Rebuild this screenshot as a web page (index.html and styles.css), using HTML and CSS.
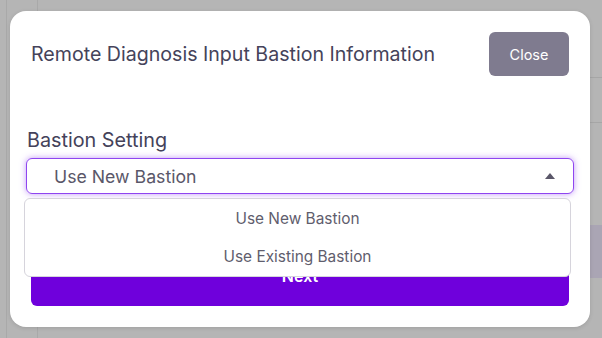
FILE: index.html
```html
<!DOCTYPE html>
<html lang="en">
<head>
    <meta charset="UTF-8">
    <meta name="viewport" content="width=device-width, initial-scale=1.0">
    <title>Remote Diagnosis</title>
    <link rel="stylesheet" href="styles.css">
</head>
<body>
    <div class="page">
        <div class="page-side"></div>
        <div class="page-main">
            <div class="page-row"></div>
            <div class="page-row"></div>
            <div class="page-band"></div>
        </div>
    </div>

    <div class="overlay">
        <div class="modal">
            <div class="modal-header">
                <h2>Remote Diagnosis Input Bastion Information</h2>
                <button class="btn-close">Close</button>
            </div>

            <div class="modal-body">
                <label class="field-label">Bastion Setting</label>
                <div class="select-wrap">
                    <div class="select open">
                        <span>Use New Bastion</span>
                        <span class="caret"></span>
                    </div>
                    <ul class="options">
                        <li>Use New Bastion</li>
                        <li>Use Existing Bastion</li>
                    </ul>
                </div>
                <button class="btn-next">Next</button>
            </div>
        </div>
    </div>
</body>
</html>
```

FILE: styles.css
```css
* {
    box-sizing: border-box;
}

body {
    margin: 0;
    font-family: Inter, "Noto Sans", sans-serif;
    background-color: #b5b5b5;
    height: 338px;
    overflow: hidden;
}

/* page behind the overlay */
.page {
    display: flex;
    height: 338px;
}

.page-side {
    width: 32px;
    margin-left: 6px;
    border-left: 1px solid #a9a9a9;
    border-right: 1px solid #a9a9a9;
}

.page-main {
    flex: 1;
    padding-top: 77px;
}

.page-row {
    height: 45px;
    border-top: 1px solid #a6a6a6;
}

.page-band {
    margin-top: 58px;
    height: 53px;
    background-color: #aaa5b4;
}

.overlay {
    position: absolute;
    top: 0;
    left: 0;
    right: 0;
    bottom: 0;
    padding: 11px 12px 0 10px;
}

.modal {
    background: white;
    width: 580px;
    height: 316px;
    border-radius: 16px;
    box-shadow: 0 1px 4px rgba(0, 0, 0, 0.12);
}

.modal-header {
    display: flex;
    justify-content: space-between;
    align-items: center;
    padding: 21px 21px 0 21px;
}

.modal-header h2 {
    margin: 0;
    font-size: 19.6px;
    font-weight: 400;
    color: #45435a;
}

.btn-close {
    width: 80px;
    height: 44px;
    border: none;
    border-radius: 6px;
    background-color: #7f7b8f;
    color: white;
    font-family: inherit;
    font-size: 14.5px;
}

.modal-body {
    padding: 0 16px;
}

.field-label {
    display: block;
    margin-top: 53px;
    margin-left: 1px;
    font-size: 19.8px;
    color: #44425a;
    line-height: 23px;
}

.select-wrap {
    position: relative;
    margin-top: 6px;
}

.select {
    display: flex;
    justify-content: space-between;
    align-items: center;
    height: 36px;
    padding: 0 18px 0 27px;
    border: 1px solid #8f45f0;
    border-radius: 6px;
    box-shadow: 0 0 6px rgba(143, 69, 240, 0.55);
    font-size: 17.7px;
    color: #5a5769;
}

.caret {
    width: 0;
    height: 0;
    border-left: 5px solid transparent;
    border-right: 5px solid transparent;
    border-bottom: 6px solid #5a5769;
}

.options {
    position: absolute;
    top: 40px;
    left: -2px;
    width: 547px;
    margin: 0;
    padding: 1px 0 0 0;
    list-style: none;
    background: white;
    border: 1px solid #d6d4dc;
    border-radius: 6px;
    z-index: 2;
}

.options li {
    height: 38px;
    line-height: 38px;
    text-align: center;
    font-size: 15.4px;
    color: #5f5d6d;
}

.btn-next {
    display: block;
    width: 538px;
    height: 60px;
    margin: 52px 0 0 5px;
    border: none;
    border-radius: 6px;
    background-color: #6f00dc;
    color: white;
    font-family: inherit;
    font-size: 16px;
    font-weight: 600;
}
```
